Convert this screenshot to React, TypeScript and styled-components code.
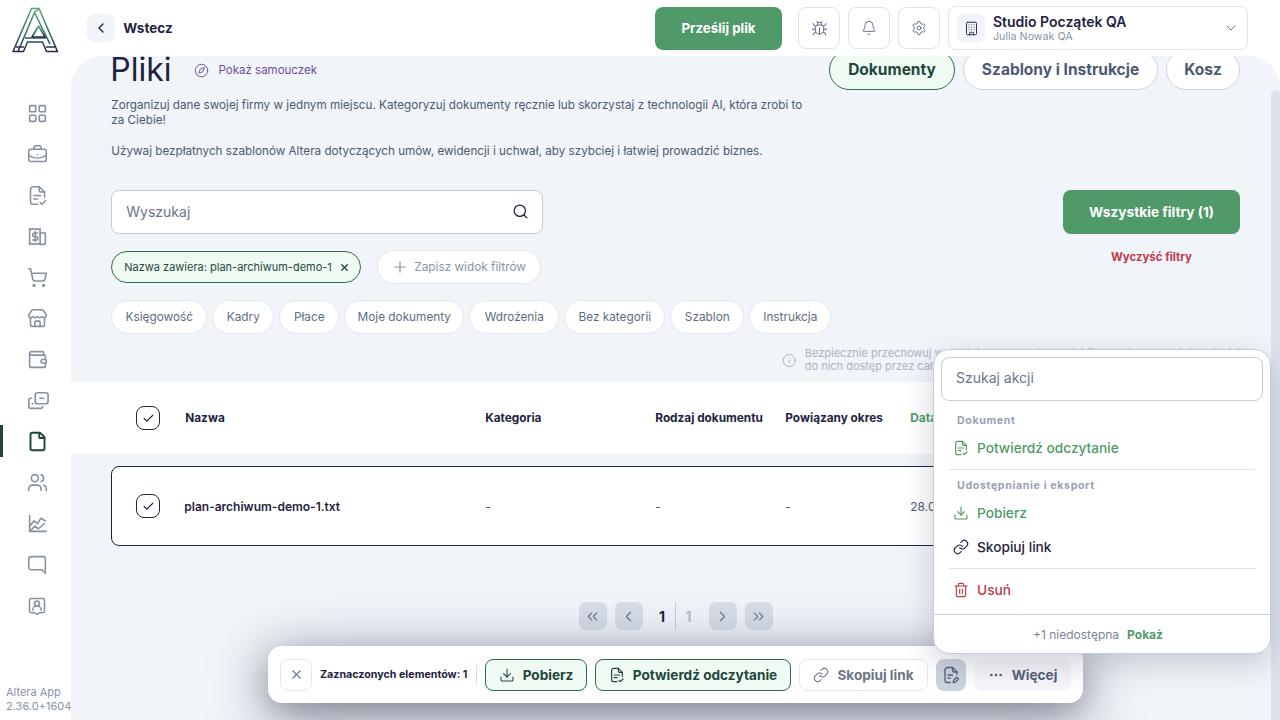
import React from 'react';
import styled, { createGlobalStyle } from 'styled-components';
import {
  LayoutGrid, BriefcaseBusiness, ShoppingCart, Store, Wallet, File, Users, Bug, Bell, Settings, Building,
  ChevronDown, ChevronLeft, ChevronRight, ChevronsLeft, ChevronsRight, Search, Plus, X, Info, Compass,
  Download, Link, Trash2, Ellipsis, Check,
} from 'lucide-react';

const FONT = `Inter, "Noto Sans", sans-serif`;
const INK = '#1f2342';
const GREEN = '#4f9a68';
const GREEN_DARK = '#2f6b4f';
const SLATE = '#4d5972';
const MUTED = '#8a94a8';
const LINE = '#c5ccd9';
const PANEL = '#f1f4f9';

const Global = createGlobalStyle`
  html, body { margin: 0; padding: 0; background: #fff; }
  body { font-family: ${FONT}; color: ${INK}; }
  * { box-sizing: border-box; }
`;

const Page = styled.div`
  position: relative;
  display: flex;
  width: 1280px;
  height: 720px;
  overflow: hidden;
  background: #fff;
`;

const Sidebar = styled.aside`
  position: relative;
  display: flex;
  flex-direction: column;
  flex: 0 0 71px;
  height: 720px;
  background: #fff;
`;
const LogoBox = styled.div`
  height: 93px;
  padding: 7px 0 0 11px;
`;
const NavList = styled.nav`
  display: flex;
  flex-direction: column;
`;
const NavItem = styled.div<{ $active?: boolean }>`
  position: relative;
  display: flex;
  align-items: center;
  height: 41px;
  padding-left: 27px;
  color: ${p => (p.$active ? '#20453f' : '#87919f')};
  ${p => p.$active && `&::before { content: ''; position: absolute; left: 0; top: 4px; width: 3px; height: 32px; background: #20453f; }`}
`;
const Version = styled.div`
  margin-top: auto;
  padding: 0 0 7px 6px;
  font-size: 11px;
  line-height: 14px;
  color: ${MUTED};
  white-space: nowrap;
`;

const Main = styled.div`
  display: flex;
  flex-direction: column;
  flex: 1;
  min-width: 0;
`;
const Header = styled.header`
  display: flex;
  align-items: center;
  flex: 0 0 56px;
  padding: 0 32px 0 16px;
  background: #fff;
`;
const BackButton = styled.button`
  display: flex;
  align-items: center;
  justify-content: center;
  width: 28px;
  height: 28px;
  padding: 0;
  border: 0;
  border-radius: 8px;
  background: ${PANEL};
  color: ${INK};
`;
const BackLabel = styled.span`
  margin-left: 8px;
  font-size: 13.5px;
  font-weight: 700;
`;
const HeaderRight = styled.div`
  display: flex;
  align-items: center;
  margin-left: auto;
`;
const UploadButton = styled.button`
  width: 127px;
  height: 43px;
  margin-right: 16px;
  border: 0;
  border-radius: 8px;
  background: ${GREEN};
  color: #fff;
  font: 700 13.3px ${FONT};
`;
const IconButton = styled.button`
  display: flex;
  align-items: center;
  justify-content: center;
  width: 42px;
  height: 42px;
  margin-right: 8px;
  padding: 0;
  border: 1px solid #dfe4ec;
  border-radius: 8px;
  background: #fff;
  color: #5d6880;
`;
const Company = styled.div`
  display: flex;
  align-items: center;
  width: 300px;
  height: 44px;
  padding: 0 8px;
  border: 1px solid #dfe4ec;
  border-radius: 8px;
  background: #fff;
`;
const CompanyIcon = styled.div`
  display: flex;
  align-items: center;
  justify-content: center;
  width: 28px;
  height: 28px;
  margin-right: 8px;
  border-radius: 6px;
  background: ${PANEL};
  color: ${INK};
`;
const CompanyText = styled.div`
  display: flex;
  flex-direction: column;
  flex: 1;
`;
const CompanyName = styled.span`
  font-size: 14px;
  line-height: 17px;
  font-weight: 600;
`;
const CompanyUser = styled.span`
  font-size: 10.7px;
  line-height: 13px;
  color: ${MUTED};
`;

const Panel = styled.main`
  flex: 1;
  overflow: hidden;
  border-radius: 32px 32px 0 0;
  background: ${PANEL};
`;
const TopSection = styled.section`
  margin-top: -6px;
  padding: 0 40px;
`;
const TitleRow = styled.div`
  display: flex;
  align-items: center;
  height: 40px;
`;
const Title = styled.h1`
  margin: 0 0 0 -1px;
  font-size: 32px;
  font-weight: 400;
  line-height: 40px;
`;
const Tutorial = styled.div`
  display: flex;
  align-items: center;
  gap: 10px;
  margin-left: 22px;
  font-size: 11.5px;
  color: #6a4ea0;
`;
const Tabs = styled.div`
  display: flex;
  gap: 8px;
  margin-left: auto;
`;
const Tab = styled.div<{ $active?: boolean }>`
  display: flex;
  align-items: center;
  justify-content: center;
  height: 40px;
  padding-bottom: 1px;
  border: 1px solid ${p => (p.$active ? GREEN_DARK : '#ccd3df')};
  border-radius: 20px;
  background: ${p => (p.$active ? '#effaf3' : '#fff')};
  color: ${p => (p.$active ? '#21463c' : SLATE)};
  font-size: 15.5px;
  font-weight: 700;
  white-space: nowrap;
`;
const Description = styled.div`
  width: 700px;
  margin-top: 8px;
  font-size: 11.7px;
  line-height: 15px;
  color: ${SLATE};
`;
const DescPara = styled.p`
  margin: 0 0 16px;
`;
const FiltersGrid = styled.div`
  display: flex;
  justify-content: space-between;
  margin-top: 31px;
`;
const FiltersLeft = styled.div`
  display: flex;
  flex-direction: column;
`;
const SearchBox = styled.div`
  display: flex;
  align-items: center;
  justify-content: space-between;
  width: 432px;
  height: 44px;
  padding: 0 13px 2px 14px;
  border: 1px solid ${LINE};
  border-radius: 8px;
  background: #fff;
  color: ${INK};
`;
const SearchHint = styled.span`
  font-size: 14px;
  color: #6b7589;
`;
const ChipRow = styled.div`
  display: flex;
  align-items: center;
  gap: 16px;
  margin-top: 16px;
`;
const ActiveChip = styled.div`
  display: flex;
  align-items: center;
  justify-content: space-between;
  width: 250px;
  height: 32px;
  padding: 0 10px 0 12px;
  border: 1px solid ${GREEN_DARK};
  border-radius: 16px;
  background: #effaf3;
  font-size: 11px;
  color: #254a40;
  white-space: nowrap;
`;
const SaveChip = styled.div`
  display: flex;
  align-items: center;
  gap: 5px;
  width: 164px;
  height: 34px;
  padding: 0 14px 0 13px;
  border: 1px solid #e3e8ef;
  border-radius: 17px;
  background: #fff;
  font-size: 11.8px;
  color: ${MUTED};
  white-space: nowrap;
`;
const TagRow = styled.div`
  display: flex;
  gap: 5px;
  margin-top: 16px;
`;
const Tag = styled.div`
  display: flex;
  align-items: center;
  justify-content: center;
  height: 34px;
  border: 1px solid #e3e8ef;
  border-radius: 17px;
  background: #fff;
  font-size: 11.8px;
  color: #616c82;
  white-space: nowrap;
`;
const FiltersRight = styled.div`
  display: flex;
  flex-direction: column;
  align-items: center;
  width: 177px;
`;
const AllFilters = styled.button`
  width: 177px;
  height: 44px;
  border: 0;
  border-radius: 8px;
  background: ${GREEN};
  color: #fff;
  font: 700 13.7px ${FONT};
`;
const ClearFilters = styled.span`
  margin-top: 16px;
  font-size: 11.4px;
  font-weight: 700;
  color: #c03a4c;
`;
const InfoRow = styled.div`
  display: flex;
  align-items: center;
  gap: 8px;
  height: 26px;
  margin: 13px 0 0 671px;
  color: #a3acbb;
  white-space: nowrap;
`;
const InfoText = styled.div`
  font-size: 11px;
  line-height: 13px;
  color: #aab3c2;
`;

const columns = '49px 300px 170px 130px 125px 1fr';
const TableHead = styled.div`
  display: grid;
  grid-template-columns: ${columns};
  align-items: center;
  height: 72px;
  margin-top: 9px;
  padding-left: 65px;
  background: #fff;
  font-size: 11.8px;
  font-weight: 700;
  white-space: nowrap;
`;
const DateHead = styled.span`
  color: ${GREEN};
`;
const Box = styled.div`
  display: flex;
  align-items: center;
  justify-content: center;
  width: 24px;
  height: 24px;
  border: 1px solid ${INK};
  border-radius: 8px;
  background: #fff;
  color: ${INK};
`;
const RowCard = styled.div`
  display: grid;
  grid-template-columns: ${columns};
  align-items: center;
  height: 80px;
  margin: 12px 40px 0;
  padding-left: 24px;
  border: 1px solid ${INK};
  border-radius: 8px;
  background: #fff;
  font-size: 12px;
  white-space: nowrap;
`;
const FileName = styled.span`
  margin-left: -1px;
  font-weight: 600;
`;
const Cell = styled.span`
  color: ${SLATE};
`;
const Pager = styled.div`
  display: flex;
  align-items: center;
  justify-content: center;
  height: 28px;
  margin-top: 56px;
`;
const PageBtn = styled.div`
  display: flex;
  align-items: center;
  justify-content: center;
  width: 28px;
  height: 28px;
  margin: 0 4px;
  border-radius: 7px;
  background: #d7dee8;
  color: #6b7589;
`;
const PageNum = styled.span<{ $current?: boolean }>`
  display: flex;
  align-items: center;
  justify-content: center;
  width: 29px;
  height: 28px;
  font-size: 14px;
  font-weight: 700;
  color: ${p => (p.$current ? INK : '#b7c0ce')};
  ${p => (p.$current ? `border-right: 1px solid #c5ccd9; padding-left: 3px;` : `padding-right: 3px;`)}
`;

const ScrollTrack = styled.div`
  position: absolute;
  top: 90px;
  right: 0;
  bottom: 0;
  width: 9px;
  border-radius: 5px 5px 0 0;
  background: #dde3ed;
`;

const ActionBar = styled.div`
  position: absolute;
  left: 268px;
  top: 646px;
  display: flex;
  align-items: center;
  gap: 8px;
  width: 815px;
  height: 57px;
  padding: 0 12px;
  border-radius: 14px;
  background: #fff;
  box-shadow: 0 10px 40px rgba(30, 35, 60, 0.5), 0 16px 80px rgba(30, 35, 60, 0.2);
`;
const CloseBtn = styled.div`
  display: flex;
  align-items: center;
  justify-content: center;
  width: 32px;
  height: 32px;
  border: 1px solid #e3e8ef;
  border-radius: 8px;
  color: #6b7589;
`;
const Count = styled.span`
  width: 148px;
  font-size: 10.7px;
  font-weight: 700;
  white-space: nowrap;
`;
const VDivider = styled.div`
  width: 1px;
  height: 20px;
  background: #d5dbe5;
`;
const BarGreen = styled.div`
  display: flex;
  align-items: center;
  justify-content: center;
  gap: 8px;
  height: 32px;
  border: 1px solid ${GREEN_DARK};
  border-radius: 8px;
  background: #effaf3;
  color: #21463c;
  font-size: 13.6px;
  font-weight: 700;
  white-space: nowrap;
`;
const BarLight = styled(BarGreen)`
  border-color: #e3e8ef;
  background: #fff;
  color: #6b7589;
`;
const BarIcon = styled.div`
  display: flex;
  align-items: center;
  justify-content: center;
  width: 30px;
  height: 32px;
  border-radius: 8px;
  background: #ccd4e0;
  color: #55617a;
`;
const BarMore = styled(BarGreen)`
  width: 97px;
  border: 0;
  background: #f6f7f9;
  color: #55617a;
`;

const Menu = styled.div`
  position: absolute;
  left: 933px;
  top: 349px;
  display: flex;
  flex-direction: column;
  width: 338px;
  height: 305px;
  border: 1px solid ${LINE};
  border-radius: 16px;
  background: #fff;
  box-shadow: 0 10px 30px rgba(40, 50, 80, 0.22);
`;
const MenuBody = styled.div`
  flex: 1;
  padding: 7px 7px 0;
`;
const MenuSearch = styled.div`
  display: flex;
  align-items: center;
  height: 44px;
  padding: 0 14px 3px;
  border: 1px solid ${LINE};
  border-radius: 8px;
  font-size: 14px;
  color: #6b7589;
`;
const MenuLabel = styled.div<{ $tight?: boolean }>`
  height: 16px;
  margin: ${p => (p.$tight ? 8 : 12)}px 0 2px 16px;
  font-size: 10.6px;
  line-height: 16px;
  font-weight: 700;
  letter-spacing: 0.65px;
  color: #98a2b4;
`;
const MenuItem = styled.div<{ $color: string; $spaced?: boolean }>`
  display: flex;
  align-items: center;
  gap: 8px;
  height: 34px;
  margin-top: ${p => (p.$spaced ? 4 : 0)}px;
  padding-left: 12px;
  font-size: 13.7px;
  font-weight: 500;
  color: ${p => p.$color};
`;
const MenuIcon = styled.span<{ $color?: string }>`
  display: flex;
  color: ${p => p.$color || 'inherit'};
`;
const MenuSep = styled.div`
  height: 1px;
  margin: 4px 8px 0;
  background: #dde2ea;
`;
const MenuFooter = styled.div`
  display: flex;
  align-items: center;
  justify-content: center;
  gap: 8px;
  flex: 0 0 39px;
  padding-right: 8px;
  border-top: 1px solid ${LINE};
  font-size: 12px;
  color: #7a8498;
`;
const ShowLink = styled.span`
  font-weight: 700;
  color: ${GREEN};
`;

const Logo = () => (
  <svg width="48" height="46" viewBox="0 0 48 46" fill="none">
    <defs>
      <linearGradient id="lg" x1="0" y1="0" x2="0" y2="1">
        <stop offset="0" stopColor="#55a874" />
        <stop offset="0.55" stopColor="#2f6f63" />
        <stop offset="1" stopColor="#252647" />
      </linearGradient>
    </defs>
    <g stroke="url(#lg)" strokeWidth="1.5" strokeLinejoin="round">
      <path d="M2 44.5 20.5 1.5H28L46.5 44.5H35.5L31.5 35H16.5L12.5 44.5Z" />
      <path d="M7 44.5 23.5 5.5 39 37M14 31H35M5 40H13M35 40H44M28 1.5 23.5 5.5" />
      <path d="M27.5 19 21 30H34Z" />
    </g>
  </svg>
);

const Ico: React.FC<{ size?: number; sw?: number; children: React.ReactNode }> = ({ size = 20, sw = 1.8, children }) => (
  <svg width={size} height={size} viewBox="0 0 24 24" fill="none" stroke="currentColor" strokeWidth={sw} strokeLinecap="round" strokeLinejoin="round">
    {children}
  </svg>
);
const FileTick = ({ size = 20 }: { size?: number }) => (
  <Ico size={size}>
    <path d="M12 22H7a3 3 0 0 1-3-3V5a3 3 0 0 1 3-3h7l6 6v6" />
    <path d="M14 2v4a2 2 0 0 0 2 2h4" />
    <path d="M8 12h8M8 16h4" />
    <path d="m15 20 2 2 4-4" />
  </Ico>
);
const FileEdit = () => (
  <Ico size={18}>
    <path d="M11 22H7a3 3 0 0 1-3-3V5a3 3 0 0 1 3-3h7l6 6v3" />
    <path d="M14 2v4a2 2 0 0 0 2 2h4" />
    <path d="M8 12h6M8 16h3" />
    <path d="m15 22 .6-3 4-4 2.4 2.4-4 4Z" />
  </Ico>
);
const ReceiptDollar = () => (
  <Ico size={21}>
    <path d="M3 3v18l2-1 2 1 2-1 2 1 2-1 2 1V3l-2 1-2-1-2 1-2-1-2 1Z" />
    <path d="M15 8h6v11a2 2 0 0 1-2 2h-4" />
    <path d="M12 8H8.5a1.7 1.7 0 0 0 0 4h2a1.7 1.7 0 0 1 0 4H6.5" />
    <path d="M9.5 6.5v11" />
  </Ico>
);
const Payment = () => (
  <Ico size={22}>
    <rect x="9" y="3" width="14" height="12" rx="2.5" />
    <path d="M14 9h4" />
    <path d="M5 9H4a2 2 0 0 0-2 2v7a2 2 0 0 0 2 2h11a2 2 0 0 0 2-2" />
    <path d="M6 15h.01" strokeWidth="2.4" />
  </Ico>
);
const Growth = () => (
  <Ico size={21}>
    <path d="M3 3v18h19" />
    <path d="m3 15 5-6 4 3 4-6 5 3" />
    <path d="m3 21 6-6 4 3 7-6" />
  </Ico>
);
const Bubble = () => (
  <Ico size={21}>
    <path d="M21 22 17 18H5a3 3 0 0 1-3-3V6a3 3 0 0 1 3-3h14a2 2 0 0 1 2 2Z" />
  </Ico>
);
const ContactPin = () => (
  <Ico size={20}>
    <path d="M5 3h14a2 2 0 0 1 2 2v13a2 2 0 0 1-2 2h-4l-3 2-3-2H5a2 2 0 0 1-2-2V5a2 2 0 0 1 2-2Z" />
    <circle cx="12" cy="9" r="3" />
    <path d="M7 17a5 5 0 0 1 10 0" />
  </Ico>
);

const navIcons: { node: React.ReactNode; active?: boolean }[] = [
  { node: <LayoutGrid size={21} strokeWidth={1.8} /> },
  { node: <BriefcaseBusiness size={21} strokeWidth={1.8} /> },
  { node: <FileTick size={21} /> },
  { node: <ReceiptDollar /> },
  { node: <ShoppingCart size={21} strokeWidth={1.8} /> },
  { node: <Store size={21} strokeWidth={1.8} /> },
  { node: <Wallet size={21} strokeWidth={1.8} /> },
  { node: <Payment /> },
  { node: <File size={21} strokeWidth={2.2} />, active: true },
  { node: <Users size={21} strokeWidth={1.8} /> },
  { node: <Growth /> },
  { node: <Bubble /> },
  { node: <ContactPin /> },
];

const tags: [string, number][] = [
  ['Księgowość', 96], ['Kadry', 62], ['Płace', 60], ['Moje dokumenty', 120],
  ['Wdrożenia', 90], ['Bez kategorii', 101], ['Szablon', 74], ['Instrukcja', 82],
];
const tabs: [string, number, boolean][] = [
  ['Dokumenty', 126, true], ['Szablony i Instrukcje', 195, false], ['Kosz', 74, false],
];

export default function App() {
  return (
    <Page>
      <Global />
      <Sidebar>
        <LogoBox><Logo /></LogoBox>
        <NavList>
          {navIcons.map((n, i) => (
            <NavItem key={i} $active={n.active}>{n.node}</NavItem>
          ))}
        </NavList>
        <Version>Altera App<br />2.36.0+1604</Version>
      </Sidebar>
      <Main>
        <Header>
          <BackButton><ChevronLeft size={16} /></BackButton>
          <BackLabel>Wstecz</BackLabel>
          <HeaderRight>
            <UploadButton>Prześlij plik</UploadButton>
            <IconButton><Bug size={17} strokeWidth={1.4} /></IconButton>
            <IconButton><Bell size={16} strokeWidth={1.4} /></IconButton>
            <IconButton><Settings size={16} strokeWidth={1.4} /></IconButton>
            <Company>
              <CompanyIcon><Building size={15} strokeWidth={1.5} /></CompanyIcon>
              <CompanyText>
                <CompanyName>Studio Początek QA</CompanyName>
                <CompanyUser>Julia Nowak QA</CompanyUser>
              </CompanyText>
              <ChevronDown size={16} color="#6b7589" strokeWidth={1.5} />
            </Company>
          </HeaderRight>
        </Header>
        <Panel>
          <TopSection>
            <TitleRow>
              <Title>Pliki</Title>
              <Tutorial><Compass size={15} strokeWidth={1.5} />Pokaż samouczek</Tutorial>
              <Tabs>
                {tabs.map(([label, w, active]) => (
                  <Tab key={label} $active={active} style={{ width: w }}>{label}</Tab>
                ))}
              </Tabs>
            </TitleRow>
            <Description>
              <DescPara>Zorganizuj dane swojej firmy w jednym miejscu. Kategoryzuj dokumenty ręcznie lub skorzystaj z technologii AI, która zrobi to za Ciebie!</DescPara>
              <DescPara>Używaj bezpłatnych szablonów Altera dotyczących umów, ewidencji i uchwał, aby szybciej i łatwiej prowadzić biznes.</DescPara>
            </Description>
            <FiltersGrid>
              <FiltersLeft>
                <SearchBox>
                  <SearchHint>Wyszukaj</SearchHint>
                  <Search size={17} strokeWidth={1.8} />
                </SearchBox>
                <ChipRow>
                  <ActiveChip>Nazwa zawiera: plan-archiwum-demo-1<X size={11} strokeWidth={3} /></ActiveChip>
                  <SaveChip><Plus size={18} strokeWidth={1.6} />Zapisz widok filtrów</SaveChip>
                </ChipRow>
                <TagRow>
                  {tags.map(([t, w]) => <Tag key={t} style={{ width: w }}>{t}</Tag>)}
                </TagRow>
              </FiltersLeft>
              <FiltersRight>
                <AllFilters>Wszystkie filtry (1)</AllFilters>
                <ClearFilters>Wyczyść filtry</ClearFilters>
              </FiltersRight>
            </FiltersGrid>
            <InfoRow>
              <Info size={15} strokeWidth={1.5} />
              <InfoText>Bezpiecznie przechowuj wszystkie dokumenty swojej firmy w jednym miejscu i miej<br />do nich dostęp przez całą dobę</InfoText>
            </InfoRow>
          </TopSection>
          <TableHead>
            <Box><Check size={13} strokeWidth={2} /></Box>
            <span>Nazwa</span>
            <span>Kategoria</span>
            <span>Rodzaj dokumentu</span>
            <span>Powiązany okres</span>
            <DateHead>Data dodania</DateHead>
          </TableHead>
          <RowCard>
            <Box><Check size={13} strokeWidth={2} /></Box>
            <FileName>plan-archiwum-demo-1.txt</FileName>
            <Cell>-</Cell>
            <Cell>-</Cell>
            <Cell>-</Cell>
            <Cell>28.01.2026</Cell>
          </RowCard>
          <Pager>
            <PageBtn><ChevronsLeft size={17} strokeWidth={1.5} /></PageBtn>
            <PageBtn><ChevronLeft size={17} strokeWidth={1.5} /></PageBtn>
            <PageNum $current>1</PageNum>
            <PageNum>1</PageNum>
            <PageBtn><ChevronRight size={17} strokeWidth={1.5} /></PageBtn>
            <PageBtn><ChevronsRight size={17} strokeWidth={1.5} /></PageBtn>
          </Pager>
        </Panel>
      </Main>
      <ScrollTrack />
      <ActionBar>
        <CloseBtn><X size={15} strokeWidth={1.8} /></CloseBtn>
        <Count>Zaznaczonych elementów: 1</Count>
        <VDivider />
        <BarGreen style={{ width: 102 }}><Download size={16} strokeWidth={1.6} />Pobierz</BarGreen>
        <BarGreen style={{ width: 196 }}><FileTick size={16} />Potwierdź odczytanie</BarGreen>
        <BarLight style={{ width: 129 }}><Link size={16} strokeWidth={1.6} />Skopiuj link</BarLight>
        <BarIcon><FileEdit /></BarIcon>
        <BarMore><Ellipsis size={16} />Więcej</BarMore>
      </ActionBar>
      <Menu>
        <MenuBody>
          <MenuSearch>Szukaj akcji</MenuSearch>
          <MenuLabel>Dokument</MenuLabel>
          <MenuItem $color={GREEN}><MenuIcon><FileTick size={16} /></MenuIcon>Potwierdź odczytanie</MenuItem>
          <MenuSep />
          <MenuLabel $tight>Udostępnianie i eksport</MenuLabel>
          <MenuItem $color={GREEN}><MenuIcon><Download size={16} strokeWidth={1.7} /></MenuIcon>Pobierz</MenuItem>
          <MenuItem $color={INK}><MenuIcon><Link size={16} strokeWidth={1.7} /></MenuIcon>Skopiuj link</MenuItem>
          <MenuSep />
          <MenuItem $color="#c03a4c" $spaced><MenuIcon><Trash2 size={16} strokeWidth={1.7} /></MenuIcon>Usuń</MenuItem>
        </MenuBody>
        <MenuFooter>+1 niedostępna <ShowLink>Pokaż</ShowLink></MenuFooter>
      </Menu>
    </Page>
  );
}
